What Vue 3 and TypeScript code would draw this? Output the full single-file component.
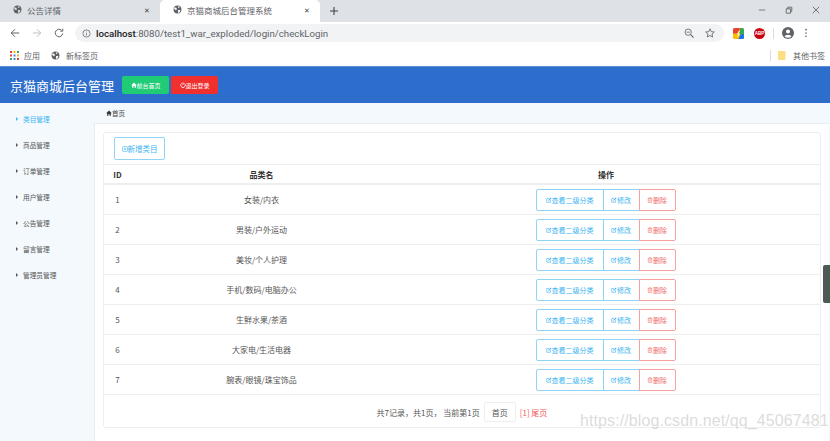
<template>
  <div class="page">
    <div class="tabstrip">
      <div class="tab">
        <svg class="globe" viewBox="0 0 16 16"><circle cx="8" cy="8" r="7" fill="#5f6368" /><path d="M3 4l3 1 1 3-2 1-3-2zM9 2l3 1-1 2-2 0zM9 9l4 0-1 4-3 1z" fill="#dee1e6" /></svg>
        <span class="tab-title">公告详情</span>
        <span class="tab-x">✕</span>
      </div>
      <div class="tab active">
        <svg class="globe" viewBox="0 0 16 16"><circle cx="8" cy="8" r="7" fill="#5f6368" /><path d="M3 4l3 1 1 3-2 1-3-2zM9 2l3 1-1 2-2 0zM9 9l4 0-1 4-3 1z" fill="#fff" /></svg>
        <span class="tab-title">京猫商城后台管理系统</span>
        <span class="tab-x">✕</span>
      </div>
      <svg class="newtab" viewBox="0 0 10 10"><path d="M5 0v10M0 5h10" stroke="#3c4043" stroke-width="1.3" /></svg>
      <div class="winctl">
        <svg viewBox="0 0 10 10"><path d="M1 5h8" stroke="#666" /></svg>
        <svg viewBox="0 0 10 10"><path d="M1.5 3.5h5.500v5.500h-5.500zM3.500 3.500v-2h5v5h-2" fill="none" stroke="#555" /></svg>
        <svg viewBox="0 0 10 10"><path d="M1 1l8 8M9 1l-8 8" stroke="#555" /></svg>
      </div>
    </div>
    <div class="toolbar">
      <svg class="nav" viewBox="0 0 12 12"><path d="M11 6H1.500M6 1.500L1.500 6 6 10.500" fill="none" stroke="#5f6368" stroke-width="1.200" /></svg>
      <svg class="nav" viewBox="0 0 12 12"><path d="M1 6h9.500M6 1.500L10.500 6 6 10.500" fill="none" stroke="#bdc1c6" stroke-width="1.200" /></svg>
      <svg class="nav" viewBox="0 0 12 12"><path d="M10.500 6.500A4.500 4.500 0 1 1 9.200 2.800M10.500 .8v3h-3" fill="none" stroke="#5f6368" stroke-width="1.200" /></svg>
      <div class="omnibox">
        <svg class="info" viewBox="0 0 12 12"><circle cx="6" cy="6" r="4.800" fill="none" stroke="#5f6368" /><path d="M6 5.500v3M6 3.500v1" stroke="#5f6368" /></svg>
        <span class="url"><b>localhost</b>:8080/test1_war_exploded/login/checkLogin</span>
        <svg class="omni-icon" viewBox="0 0 12 12"><circle cx="5" cy="5" r="3.800" fill="none" stroke="#5f6368" /><path d="M8 8l3.500 3.500" stroke="#5f6368" stroke-width="1.300" /><path d="M3 5h4" stroke="#5f6368" /></svg>
        <svg class="omni-icon star" viewBox="0 0 12 12"><path d="M6 1l1.500 3.400 3.700.4-2.800 2.400.8 3.600L6 9l-3.200 1.800.8-3.600L.8 4.800l3.700-.4z" fill="none" stroke="#5f6368" /></svg>
      </div>
      <svg class="ext" viewBox="0 0 12 12"><rect width="12" height="12" rx="2" fill="#fbbc05" /><path d="M0 2a2 2 0 0 1 2-2h6L5 6H0z" fill="#ea4335" /><path d="M8 0h2a2 2 0 0 1 2 2v8l-5-4z" fill="#34a853" /><path d="M6 12l2-5 4 0v3a2 2 0 0 1-2 2z" fill="#1a73e8" /><path d="M7 3L5 6.500h2L5 9.500" fill="none" stroke="#fff" /></svg>
      <span class="abp">ABP</span>
      <i class="tool-sep"></i>
      <svg class="avatar" viewBox="0 0 12 12"><circle cx="6" cy="6" r="6" fill="#5f6368" /><circle cx="6" cy="4.600" r="2" fill="#fff" /><path d="M2.500 9.200c1-1.700 6-1.700 7 0a4.600 4.600 0 0 1-7 0z" fill="#fff" /></svg>
      <svg class="dots" viewBox="0 0 4 12"><circle cx="2" cy="2" r="1" fill="#5f6368" /><circle cx="2" cy="6" r="1" fill="#5f6368" /><circle cx="2" cy="10" r="1" fill="#5f6368" /></svg>
    </div>
    <div class="bookmarks">
      <svg class="apps" viewBox="0 0 9 9">
        <rect v-for="a in appDots" :key="a.k" :x="a.x" :y="a.y" width="2" height="2" :fill="a.c" />
      </svg>
      <span class="bm">应用</span>
      <svg class="globe bm-globe" viewBox="0 0 16 16"><circle cx="8" cy="8" r="7" fill="#5f6368" /><path d="M3 4l3 1 1 3-2 1-3-2zM9 2l3 1-1 2-2 0zM9 9l4 0-1 4-3 1z" fill="#fff" /></svg>
      <span class="bm">新标签页</span>
      <i class="bm-sep"></i>
      <svg class="folder" viewBox="0 0 8 9"><path d="M0 1a1 1 0 0 1 1-1h5.500a1 1 0 0 1 1 1v7a1 1 0 0 1-1 1H1a1 1 0 0 1-1-1z" fill="#fdd663" opacity=".8" /></svg>
      <span class="bm">其他书签</span>
    </div>

    <header class="topbar">
      <span class="brand">京猫商城后台管理</span>
      <a class="top-btn green">
        <svg class="ic" viewBox="0 0 8 8"><path d="M4 .8L.3 4.200h1.200V7.500h1.800V5.200h1.400v2.300h1.800V4.200h1.200z" fill="#fff" /></svg>前台首页
      </a>
      <a class="top-btn red">
        <svg class="ic" viewBox="0 0 8 8"><path d="M2.400 1.800a3 3 0 1 0 3.200 0M4 .5v3.200" fill="none" stroke="#fff" stroke-width="1.100" /></svg>退出登录
      </a>
    </header>

    <div class="body">
      <aside class="sidebar">
        <div v-for="(m, i) in menus" :key="m" class="menu-item" :class="{ on: i === 0 }">
          <i class="tri"></i>{{ m }}
        </div>
      </aside>
      <main class="content">
        <div class="crumb">
          <svg class="ic" viewBox="0 0 8 8"><path d="M4 .8L.3 4.200h1.200V7.500h1.800V5.200h1.400v2.300h1.800V4.200h1.200z" fill="#333" /></svg>首页
        </div>
        <div class="panel">
          <div class="card">
            <div class="card-top">
              <a class="add-btn">
                <svg class="ic" viewBox="0 0 8 8"><rect x=".5" y=".5" width="7" height="7" rx="2" fill="none" stroke="#3bb4f2" stroke-width=".8" /><path d="M4 2v4M2 4h4" stroke="#3bb4f2" stroke-width=".8" /></svg>新增类目
              </a>
            </div>
            <table class="tbl">
              <thead>
                <tr><th class="c-id">ID</th><th class="c-name">品类名</th><th>操作</th></tr>
              </thead>
              <tbody>
                <tr v-for="row in rows" :key="row.id">
                  <td class="c-id">{{ row.id }}</td>
                  <td class="c-name">{{ row.name }}</td>
                  <td>
                    <div class="btn-group">
                      <a class="op blue wide">
                        <svg class="ic" viewBox="0 0 8 8"><path d="M6 4.500V7H1V2h3" fill="none" stroke="#3bb4f2" stroke-width=".8" /><path d="M3 5l.4-1.400L6.400.8l1 1-3 2.800z" fill="#3bb4f2" /></svg>查看二级分类
                      </a>
                      <a class="op blue">
                        <svg class="ic" viewBox="0 0 8 8"><path d="M6 4.500V7H1V2h3" fill="none" stroke="#3bb4f2" stroke-width=".8" /><path d="M3 5l.4-1.400L6.400.8l1 1-3 2.800z" fill="#3bb4f2" /></svg>修改
                      </a>
                      <a class="op danger">
                        <svg class="ic" viewBox="0 0 8 8"><path d="M1 1.800h6M3 1.800V1h2v.8M1.700 1.800V7.300h4.600V1.800" fill="none" stroke="#f37b7b" stroke-width=".8" /><path d="M3.200 3v3M4.800 3v3" stroke="#f37b7b" stroke-width=".7" /></svg>删除
                      </a>
                    </div>
                  </td>
                </tr>
              </tbody>
            </table>
            <div class="pager">
              共7记录，共1页， 当前第1页
              <span class="first">首页</span>
              <span class="cur">[1] 尾页</span>
            </div>
          </div>
        </div>
      </main>
    </div>

    <div class="side-widget"></div>
    <div class="watermark">https://blog.csdn.net/qq_45067481</div>
  </div>
</template>

<script setup lang="ts">
interface Row {
  id: number
  name: string
}

const menus: string[] = ['类目管理', '商品管理', '订单管理', '用户管理', '公告管理', '留言管理', '管理员管理']

const rows: Row[] = [
  { id: 1, name: '女装/内衣' },
  { id: 2, name: '男装/户外运动' },
  { id: 3, name: '美妆/个人护理' },
  { id: 4, name: '手机/数码/电脑办公' },
  { id: 5, name: '生鲜水果/茶酒' },
  { id: 6, name: '大家电/生活电器' },
  { id: 7, name: '腕表/眼镜/珠宝饰品' }
]

const dotColors = ['#ea4335', '#fbbc05', '#34a853', '#ea4335', '#4285f4', '#fbbc05', '#34a853', '#4285f4', '#ea4335']
const appDots = dotColors.map((c, k) => ({ k, c, x: (k % 3) * 3.5, y: Math.floor(k / 3) * 3.5 }))
</script>

<style>
html,
body {
  margin: 0;
  background: #fff;
  overflow: hidden;
}
</style>

<style scoped>
.page {
  position: relative;
  width: 830px;
  height: 441px;
  overflow: hidden;
  display: flex;
  flex-direction: column;
  font-family: "Noto Sans CJK SC", "Liberation Sans", sans-serif;
  color: #555;
}

.tabstrip {
  height: 22px;
  flex: none;
  background: #dee1e6;
  display: flex;
  align-items: flex-end;
}

.tab {
  width: 160px;
  height: 22px;
  box-sizing: border-box;
  padding: 0 10px 3px 13px;
  display: flex;
  align-items: center;
  font-size: 8.5px;
  color: #5f6368;
}

.tab.active {
  background: #fff;
  border-radius: 5px 5px 0 0;
}

.tab-title {
  flex: 1;
  margin-left: 5px;
}

.tab-x {
  font-size: 7px;
  color: #444;
}

.globe {
  width: 9px;
  height: 9px;
}

.newtab {
  width: 8px;
  height: 8px;
  margin: 0 0 7px 10px;
}

.winctl {
  margin-left: auto;
  display: flex;
  gap: 19px;
  padding: 0 10px 8px 0;
}

.winctl svg {
  width: 8px;
  height: 8px;
}

.toolbar {
  height: 22px;
  flex: none;
  background: #fff;
  display: flex;
  align-items: center;
  padding-left: 10px;
  box-sizing: border-box;
}

.nav {
  width: 10px;
  height: 10px;
  margin-right: 12px;
}

.omnibox {
  width: 649px;
  height: 18px;
  margin-left: -1px;
  background: #f1f3f4;
  border-radius: 9px;
  display: flex;
  align-items: center;
  padding: 0 9px 0 7px;
  box-sizing: border-box;
}

.info {
  width: 9px;
  height: 9px;
  margin-right: 5px;
}

.url {
  flex: 1;
  font-family: "Roboto", "Liberation Sans", sans-serif;
  font-size: 9.7px;
  color: #5f6368;
}

.url b {
  font-weight: 500;
  color: #202124;
}

.omni-icon {
  width: 10px;
  height: 10px;
}

.star {
  margin-left: 11px;
}

.ext {
  width: 11px;
  height: 11px;
  margin-left: 9px;
}

.abp {
  width: 11px;
  height: 11px;
  margin-left: 10px;
  border-radius: 50%;
  background: #c8000f;
  color: #fff;
  font: bold 4.500px/11px "Liberation Sans", sans-serif;
  text-align: center;
}

.tool-sep {
  width: 1px;
  height: 11px;
  margin: 0 8px;
  background: #dadce0;
}

.avatar {
  width: 12px;
  height: 12px;
}

.dots {
  width: 4px;
  height: 10px;
  margin-left: 10px;
}

.bookmarks {
  height: 22px;
  flex: none;
  background: #fff;
  display: flex;
  align-items: center;
  padding: 0 5px 0 10px;
  box-sizing: border-box;
}

.apps {
  width: 9px;
  height: 9px;
  margin-right: 5px;
}

.bm {
  font-size: 8px;
  color: #5f6368;
}

.bm-globe {
  margin: 0 6px 0 11px;
}

.bm-sep {
  width: 1px;
  height: 11px;
  margin: 0 7px 0 auto;
  background: #dadce0;
}

.folder {
  width: 8px;
  height: 9px;
  margin-right: 7px;
}

.topbar {
  height: 37px;
  flex: none;
  box-sizing: border-box;
  background: #2d6dcc;
  border-top: 1px solid #5b8ed6;
  display: flex;
  align-items: center;
  padding-left: 10px;
}

.brand {
  font-size: 13px;
  color: #fff;
  margin-right: 8px;
}

.top-btn {
  height: 18px;
  display: flex;
  align-items: center;
  justify-content: center;
  box-sizing: border-box;
  border-radius: 2px;
  font-size: 6px;
  color: #fff;
  margin-right: 2px;
}

.top-btn.green {
  width: 47px;
  background: #1fcb74;
}

.top-btn.red {
  width: 47px;
  background: #f0302f;
}

.ic {
  width: 6px;
  height: 6px;
  flex: none;
  vertical-align: -0.5px;
}

.body {
  flex: 1;
  display: flex;
  min-height: 0;
  background: #f3f9fd;
}

.sidebar {
  width: 94px;
  flex: none;
  padding-top: 3px;
}

.menu-item {
  height: 26px;
  display: flex;
  align-items: center;
  padding-left: 16px;
  font-size: 6.700px;
  color: #555;
}

.menu-item.on {
  color: #3bb4f2;
}

.tri {
  width: 0;
  height: 0;
  border-left: 2.500px solid currentColor;
  border-top: 2px solid transparent;
  border-bottom: 2px solid transparent;
  margin-right: 5px;
}

.content {
  flex: 1;
  min-width: 0;
  display: flex;
  flex-direction: column;
}

.crumb {
  height: 20px;
  flex: none;
  display: flex;
  align-items: center;
  padding: 0 0 0 12px;
  font-size: 6.500px;
  color: #444;
}

.panel {
  flex: 1;
  background: #fff;
  border-top: 1px solid #e8edf0;
  border-left: 1px solid #e8edf0;
  padding: 8px 8px 0 8px;
  margin-right: 1px;
}

.card {
  border: 1px solid #eee;
  border-radius: 3px;
  height: 296px;
  box-sizing: border-box;
}

.card-top {
  height: 32px;
  padding: 4px 0 0 10px;
  box-sizing: border-box;
  border-bottom: 1px solid #eee;
}

.add-btn {
  width: 51px;
  height: 23px;
  display: flex;
  align-items: center;
  justify-content: center;
  box-sizing: border-box;
  border: 1px solid #8fd3f5;
  border-radius: 2px;
  font-size: 7.500px;
  color: #3bb4f2;
}

.tbl {
  width: 100%;
  border-collapse: collapse;
  table-layout: fixed;
  text-align: center;
  font-size: 8px;
  color: #555;
}

.tbl th {
  height: 18px;
  padding: 0;
  font-size: 8px;
  font-weight: 700;
  color: #333;
  border-bottom: 2px solid #eee;
}

.tbl td {
  height: 29px;
  padding: 0;
  border-bottom: 1px solid #eee;
}

.c-id {
  width: 27px;
}

.tbl th:nth-child(3),
.tbl td:nth-child(3) {
  width: 428px;
}

.btn-group {
  display: flex;
  justify-content: center;
  height: 22px;
  padding-right: 0;
}

.op {
  width: 37px;
  display: flex;
  align-items: center;
  justify-content: center;
  box-sizing: border-box;
  border: 1px solid;
  font-size: 7px;
  margin-left: -1px;
}

.op.blue {
  border-color: #8fd3f5;
  color: #3bb4f2;
}

.op.wide {
  width: 68px;
  border-radius: 2px 0 0 2px;
}

.op.danger {
  border-color: #f7a1a1;
  color: #ef6a6a;
  border-radius: 0 2px 2px 0;
  position: relative;
}

.pager {
  height: 34px;
  display: flex;
  align-items: center;
  justify-content: center;
  font-size: 8px;
  color: #555;
}

.first {
  margin: 0 4px;
  width: 30px;
  height: 18px;
  display: flex;
  align-items: center;
  justify-content: center;
  border: 1px solid #eee;
  border-radius: 2px;
}

.cur {
  color: #f0605c;
}

.side-widget {
  position: absolute;
  right: 0;
  top: 265px;
  width: 7px;
  height: 38px;
  background: #4b5a55;
  border-radius: 2px 0 0 2px;
}

.watermark {
  position: absolute;
  left: 580px;
  top: 412px;
  font-family: "Liberation Sans", sans-serif;
  font-size: 16px;
  letter-spacing: 0.1px;
  color: rgba(190, 190, 190, 0.55);
  white-space: nowrap;
}
</style>
